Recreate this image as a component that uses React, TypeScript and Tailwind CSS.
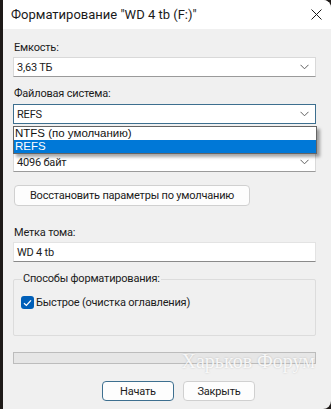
import React from 'react';

const font = { fontFamily: 'Roboto, "Noto Sans", "Liberation Sans", sans-serif' };

function Chevron() {
  return (
    <svg width="9" height="6" viewBox="0 0 9 6" className="shrink-0">
      <path d="M0.5 0.8 L4.5 4.8 L8.5 0.8" fill="none" stroke="#5f5f5f" strokeWidth="1" />
    </svg>
  );
}

function Combo({ value, focused }: { value: string; focused?: boolean }) {
  return (
    <div
      className={`h-[20px] flex items-center justify-between pl-[3px] pr-[6px] bg-white border ${
        focused ? 'border-[#3d6f8f]' : 'border-[#d9d9d9] border-b-[#9a9a9a]'
      }`}
    >
      <span className="text-[11px] tracking-[-0.2px] leading-none text-[#1b1b1b]">{value}</span>
      <Chevron />
    </div>
  );
}

export default function App() {
  return (
    <div className="w-[331px] h-[409px] bg-[#1e1a18] flex overflow-hidden" style={font}>
      <div className="ml-[3px] flex-1 flex flex-col bg-[#f0f0f0] rounded-tr-[8px] rounded-br-[8px] overflow-hidden">
        {/* Title bar */}
        <div className="h-[29px] bg-white flex items-center justify-between pl-[8px] pr-[9px] shrink-0">
          <span className="text-[13px] text-[#1a1a1a]">Форматирование "WD 4 tb (F:)"</span>
          <svg width="11" height="11" viewBox="0 0 11 11">
            <path d="M0.5 0.5 L10.5 10.5 M10.5 0.5 L0.5 10.5" stroke="#1a1a1a" strokeWidth="1" />
          </svg>
        </div>

        <div className="flex-1 flex flex-col pl-[10px] pr-[15px] pt-[11px] text-[11px] tracking-[-0.2px] text-[#1b1b1b]">
          <div className="leading-[16px] pl-[1px]">Емкость:</div>
          <div className="mt-[1px]">
            <Combo value="3,63 ТБ" />
          </div>

          <div className="mt-[9px] leading-[16px] pl-[1px]">Файловая система:</div>
          <div className="mt-[2px] relative">
            <Combo value="REFS" focused />
            <div
              className="absolute left-0 right-[-1px] top-[22px] z-10 bg-white border border-[#646464] shadow-[3px_3px_3px_rgba(0,0,0,0.35)] tracking-normal"
              style={{ fontFamily: '"Liberation Sans", Arial, sans-serif' }}
            >
              <div className="h-[13px] flex items-center pl-[1px] text-[11.5px] leading-none text-[#111]">NTFS (по умолчанию)</div>
              <div className="h-[13px] flex items-center pl-[1px] text-[11.5px] leading-none text-white bg-[#0078d7]">REFS</div>
            </div>
          </div>

          <div className="mt-[28px]">
            <Combo value="4096 байт" />
          </div>

          <button className="mt-[13px] self-start w-[236px] h-[21px] ml-[1px] rounded-[4px] bg-[#fdfdfd] border border-[#d0d0d0] leading-none whitespace-nowrap">
            Восстановить параметры по умолчанию
          </button>

          <div className="mt-[19px] leading-[16px] pl-[1px]">Метка тома:</div>
          <div className="mt-[1px] h-[20px] bg-white border border-[#e3e3e3] border-b-[#8a8a8a] flex items-center pl-[3px] leading-none">
            WD 4 tb
          </div>

          {/* Group box */}
          <div className="mt-[17px] relative h-[57px] border border-[#dcdcdc] rounded-[2px]">
            <span className="absolute left-[8px] top-[-9px] px-[1px] bg-[#f0f0f0] leading-[16px]">
              Способы форматирования:
            </span>
            <div className="flex items-center gap-[2px] pl-[7px] pt-[16px]">
              <div className="w-[13px] h-[13px] rounded-[3px] bg-[#005fb8] flex items-center justify-center">
                <svg width="9" height="8" viewBox="0 0 9 8">
                  <path d="M1 4.2 L3.4 6.4 L8 1.4" fill="none" stroke="white" strokeWidth="1.3" />
                </svg>
              </div>
              <span className="leading-none">Быстрое (очистка оглавления)</span>
            </div>
          </div>

          {/* Progress */}
          <div className="mt-[16px] relative h-[12px] bg-[#e6e6e6] border border-[#bcbcbc]">
            <span
              className="absolute right-[0px] top-[-2px] text-[20px] tracking-normal leading-none text-white/85 whitespace-nowrap"
              style={{ fontFamily: '"Liberation Serif", serif', textShadow: '0 0 2px rgba(0,0,0,0.2)' }}
            >
              Харьков Форум
            </span>
          </div>

          <div className="mt-[17px] flex gap-[9px] pl-[89px]">
            <button className="w-[72px] h-[20px] rounded-[4px] bg-[#fdfdfd] border border-[#3d6f8f] leading-none">
              Начать
            </button>
            <button className="w-[72px] h-[20px] rounded-[4px] bg-[#fdfdfd] border border-[#d0d0d0] leading-none">
              Закрыть
            </button>
          </div>
        </div>
      </div>
    </div>
  );
}
